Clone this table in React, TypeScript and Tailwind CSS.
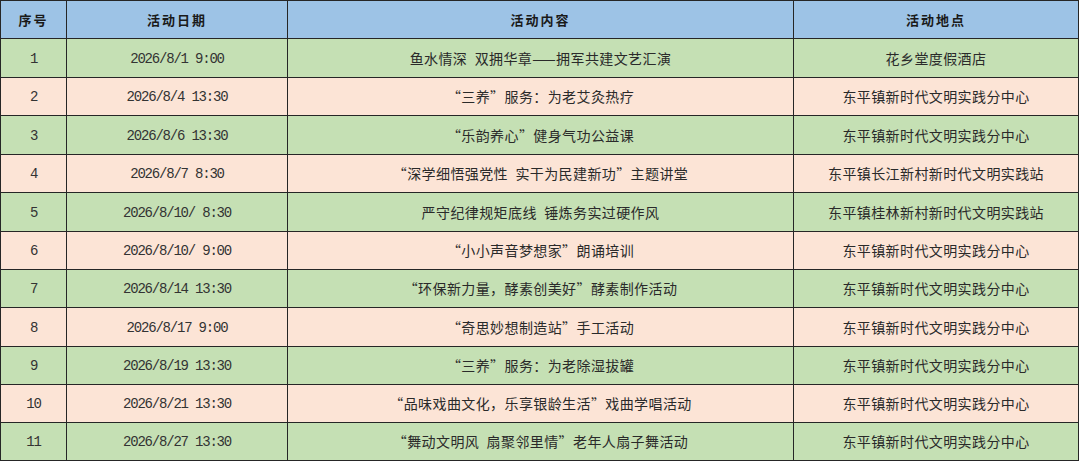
import React from "react";

const rows: [string, string, string, string][] = [
  ["1", "2026/8/1 9:00", "鱼水情深\u2002双拥华章——拥军共建文艺汇演", "花乡堂度假酒店"],
  ["2", "2026/8/4 13:30", "“三养”服务：为老艾灸热疗", "东平镇新时代文明实践分中心"],
  ["3", "2026/8/6 13:30", "“乐韵养心”健身气功公益课", "东平镇新时代文明实践分中心"],
  ["4", "2026/8/7 8:30", "“深学细悟强党性\u2002实干为民建新功”主题讲堂", "东平镇长江新村新时代文明实践站"],
  ["5", "2026/8/10/ 8:30", "严守纪律规矩底线\u2002锤炼务实过硬作风", "东平镇桂林新村新时代文明实践站"],
  ["6", "2026/8/10/ 9:00", "“小小声音梦想家”朗诵培训", "东平镇新时代文明实践分中心"],
  ["7", "2026/8/14 13:30", "“环保新力量，酵素创美好”酵素制作活动", "东平镇新时代文明实践分中心"],
  ["8", "2026/8/17 9:00", "“奇思妙想制造站”手工活动", "东平镇新时代文明实践分中心"],
  ["9", "2026/8/19 13:30", "“三养”服务：为老除湿拔罐", "东平镇新时代文明实践分中心"],
  ["10", "2026/8/21 13:30", "“品味戏曲文化，乐享银龄生活”戏曲学唱活动", "东平镇新时代文明实践分中心"],
  ["11", "2026/8/27 13:30", "“舞动文明风\u2002扇聚邻里情”老年人扇子舞活动", "东平镇新时代文明实践分中心"],
];

const mono = "font-['Liberation_Mono',monospace] text-[14px] tracking-[-1.2px] whitespace-pre text-[#333]";
const cjk = "font-['Noto_Sans_CJK_SC',sans-serif] text-[14px] tracking-[0.4px] whitespace-pre";

export default function App() {
  return (
    <div className="w-[1080px] h-[462px] bg-white">
      <div className="grid w-[1079px] grid-cols-[65px_220px_505px_284px] grid-rows-[37px_38px_37px_38px_37px_38px_37px_37px_38px_37px_37px_37px] gap-px bg-[#262626] p-px text-[#2a2a2a]">
        {["序号", "活动日期", "活动内容", "活动地点"].map((h) => (
          <div
            key={h}
            className="flex items-center justify-center bg-[#9dc3e6] font-['Noto_Sans_CJK_SC',sans-serif] text-[13px] font-bold tracking-[2px] text-[#1a1a1a]"
          >
            {h}
          </div>
        ))}
        {rows.map((r, i) => {
          const bg = i % 2 === 0 ? "bg-[#c5e0b4]" : "bg-[#fce4d6]";
          return (
            <React.Fragment key={r[0]}>
              <div className={`flex items-center justify-center pt-[2px] ${bg} ${mono}`}>{r[0]}</div>
              <div className={`flex items-center justify-center pt-[2px] ${bg} ${mono}`}>{r[1]}</div>
              <div className={`flex items-center justify-center ${bg} ${cjk}`}>{r[2]}</div>
              <div className={`flex items-center justify-center ${bg} ${cjk}`}>{r[3]}</div>
            </React.Fragment>
          );
        })}
      </div>
    </div>
  );
}
